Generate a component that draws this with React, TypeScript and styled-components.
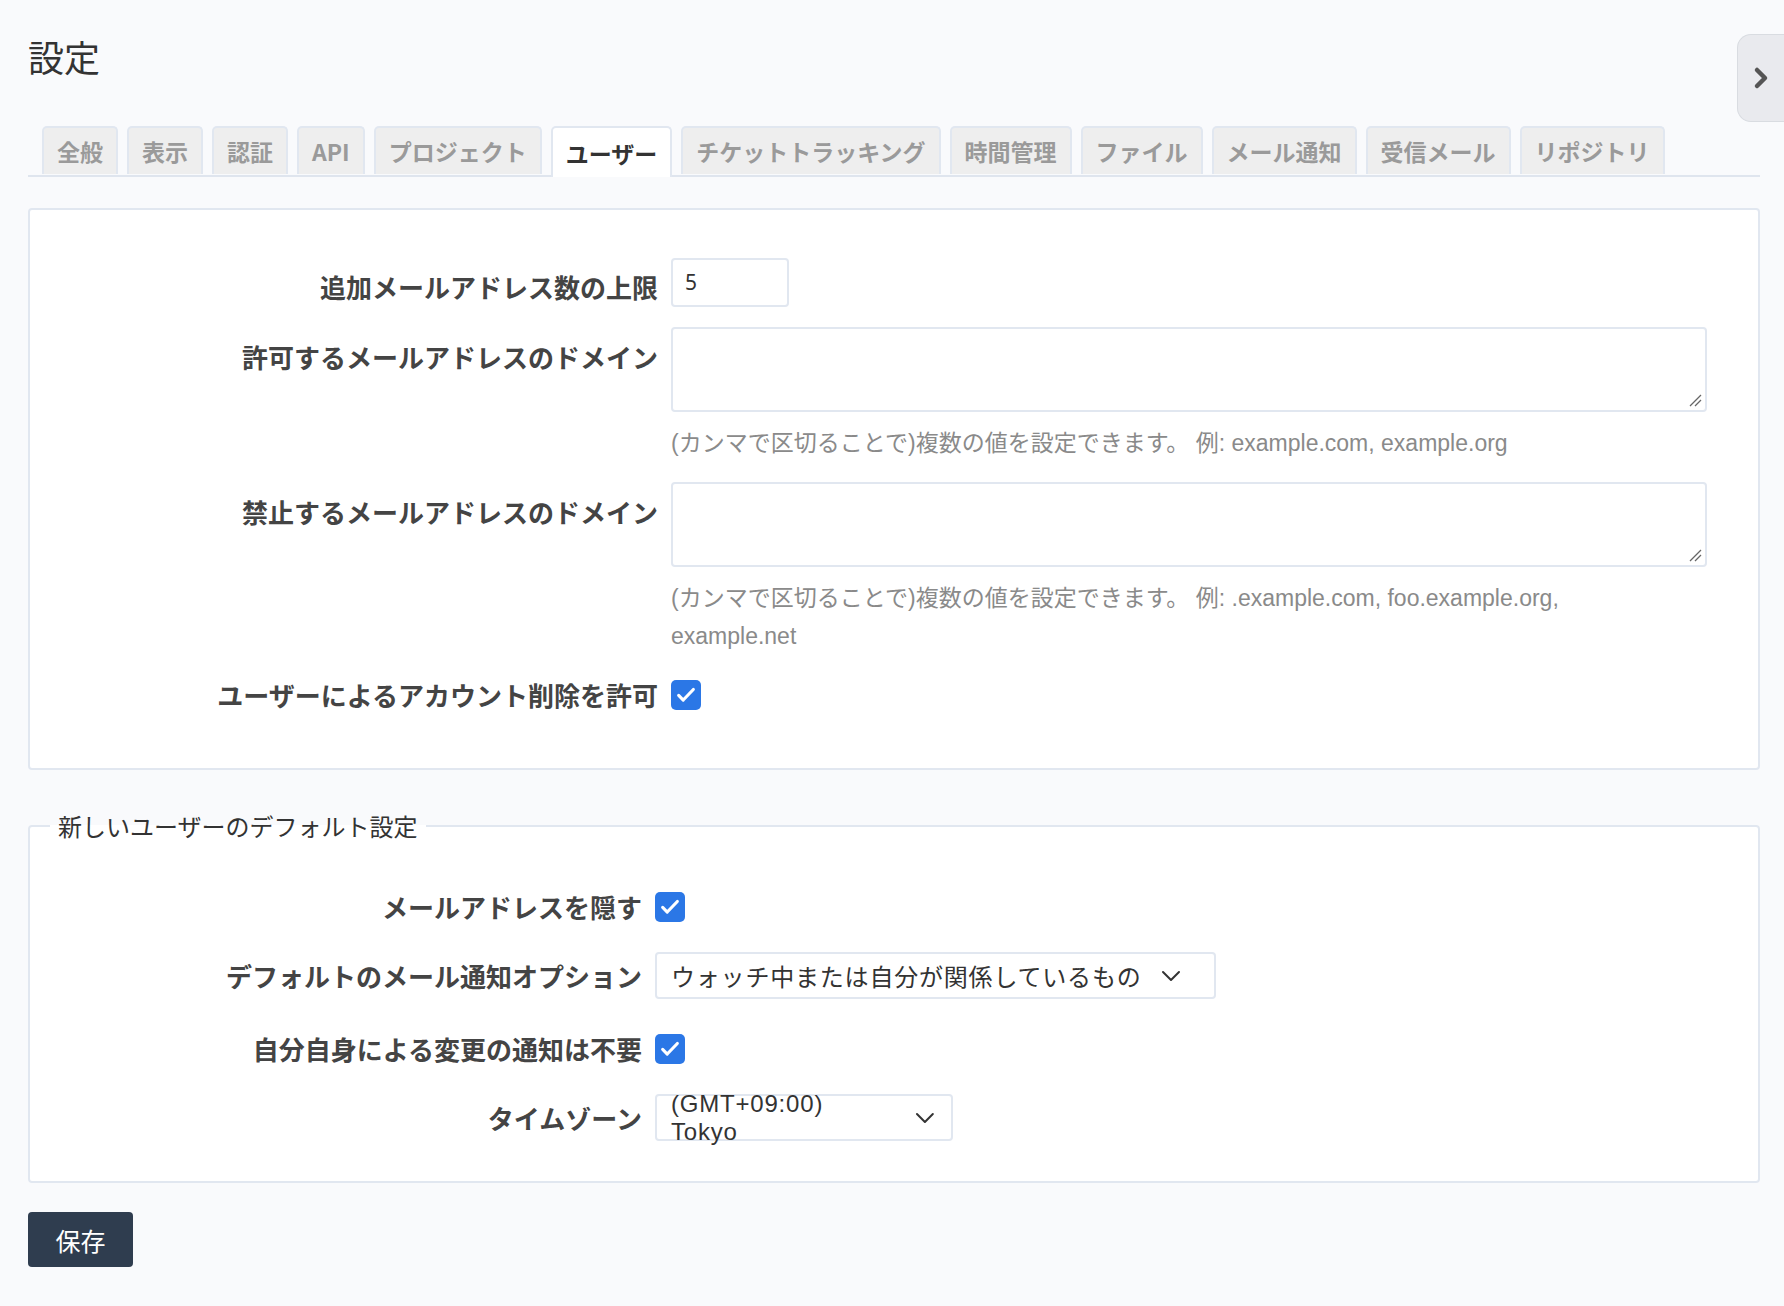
import React from "react";
import styled, { createGlobalStyle } from "styled-components";

const Global = createGlobalStyle`
  html, body { margin: 0; padding: 0; background: #f9fafc; }
  body { font-family: "Noto Sans CJK JP", "Noto Sans", sans-serif; color: #333; }
`;

const Page = styled.div`
  position: relative;
  padding: 30px 0 40px 28px;
  width: 1760px;
  box-sizing: border-box;
`;

const Title = styled.h2`
  margin: 0 0 44px;
  font-size: 36px;
  font-weight: 400;
  line-height: 52px;
  color: #333;
`;

const SideToggle = styled.div`
  position: absolute;
  right: -24px;
  top: 34px;
  width: 46px;
  height: 86px;
  background: #e9eaee;
  border: 1px solid #d9dce1;
  border-right: none;
  border-radius: 14px 0 0 14px;
  display: flex;
  align-items: center;
  justify-content: center;
`;

const Tabs = styled.div`
  display: flex;
  gap: 9px;
  padding-left: 14px;
  border-bottom: 2px solid #dfe5ee;
  height: 49px;
`;

const Tab = styled.div<{ $active?: boolean }>`
  height: ${({ $active }) => ($active ? 51 : 48)}px;
  box-sizing: border-box;
  padding: 0 13px;
  display: flex;
  align-items: center;
  font-size: 23px;
  font-weight: 700;
  color: ${({ $active }) => ($active ? "#333" : "#9a9a9a")};
  background: ${({ $active }) => ($active ? "#fff" : "#eeeeee")};
  border: 2px solid #e1e7f0;
  border-bottom: none;
  border-radius: 5px 5px 0 0;
  position: relative;
  z-index: 1;
`;

const Box = styled.div`
  margin-top: 31px;
  background: #fff;
  border: 2px solid #e1e7f0;
  border-radius: 4px;
  padding: 48px 0 50px;
`;

const Fieldset = styled.fieldset`
  margin: 38px 0 0;
  background: #fff;
  border: 2px solid #e1e7f0;
  border-radius: 4px;
  padding: 40px 0 40px;
`;

const Legend = styled.legend`
  margin-left: 20px;
  padding: 0 8px;
  font-size: 24px;
  color: #333;
`;

const Row = styled.div<{ $label: number; $gap?: number }>`
  display: grid;
  grid-template-columns: ${({ $label }) => $label}px 1fr;
  column-gap: 13px;
  align-items: start;
  margin-bottom: ${({ $gap }) => $gap ?? 20}px;
`;

const CenterRow = styled(Row)`
  align-items: center;
  min-height: 47px;
`;

const Label = styled.label<{ $pad?: number }>`
  text-align: right;
  font-size: 26px;
  font-weight: 700;
  color: #444;
  line-height: 38px;
  padding-top: ${({ $pad }) => $pad ?? 10}px;
  white-space: nowrap;
`;

const Input = styled.div`
  width: 118px;
  height: 49px;
  box-sizing: border-box;
  border: 2px solid #e1e7f0;
  border-radius: 4px;
  font-size: 21px;
  padding: 8px 12px;
  color: #333;
  font-family: "Noto Sans", sans-serif;
`;

const Textarea = styled.div`
  position: relative;
  width: 1036px;
  height: 85px;
  box-sizing: border-box;
  border: 2px solid #e1e7f0;
  border-radius: 4px;
`;

const Grip = styled.svg`
  position: absolute;
  right: 3px;
  bottom: 3px;
`;

const Hint = styled.div`
  margin-top: 12px;
  font-family: "Liberation Sans", "Noto Sans CJK JP", sans-serif;
  font-size: 23px;
  line-height: 38px;
  color: #8a8a8a;
  width: 960px;
`;

const Check = styled.div`
  width: 30px;
  height: 30px;
  border-radius: 5px;
  background: #2b77e6;
  display: flex;
  align-items: center;
  justify-content: center;
`;

const Select = styled.div<{ $w: number }>`
  width: ${({ $w }) => $w}px;
  height: 47px;
  box-sizing: border-box;
  border: 2px solid #e1e7f0;
  border-radius: 4px;
  background: #fff;
  display: flex;
  align-items: center;
  gap: 18px;
  padding: 0 14px;
  font-family: "Liberation Sans", "Noto Sans CJK JP", sans-serif;
  font-size: 24px;
  color: #333;
  letter-spacing: 0.8px;
`;

const SaveButton = styled.button`
  margin-top: 29px;
  width: 105px;
  height: 55px;
  background: #2f3d4f;
  color: #fff;
  border: none;
  border-radius: 4px;
  font-size: 25px;
  font-family: "Noto Sans CJK JP", sans-serif;
`;

const CheckBox = () => (
  <Check>
    <svg width="22" height="22" viewBox="0 0 24 24" fill="none" stroke="#fff" strokeWidth="3.4" strokeLinecap="round" strokeLinejoin="round">
      <path d="M4 12.5l5 5L20 6" />
    </svg>
  </Check>
);

const Chevron = () => (
  <svg width="24" height="24" viewBox="0 0 24 24" fill="none" stroke="#333" strokeWidth="2" strokeLinecap="round" strokeLinejoin="round">
    <path d="M4 8l8 8 8-8" />
  </svg>
);

const ResizeGrip = () => (
  <Grip width="14" height="14" viewBox="0 0 14 14" stroke="#666" strokeWidth="1.3">
    <path d="M2 13L13 2M7 13l6-6" />
  </Grip>
);

const tabs = ["全般", "表示", "認証", "API", "プロジェクト", "ユーザー", "チケットトラッキング", "時間管理", "ファイル", "メール通知", "受信メール", "リポジトリ"];

export default function App() {
  return (
    <>
      <Global />
      <Page>
        <Title>設定</Title>
        <SideToggle>
          <svg width="22" height="26" viewBox="0 0 22 26" fill="none" stroke="#555" strokeWidth="4.5" strokeLinecap="round" strokeLinejoin="round">
            <path d="M7 5l8 8-8 8" />
          </svg>
        </SideToggle>
        <Tabs>
          {tabs.map((t) => (
            <Tab key={t} $active={t === "ユーザー"}>{t}</Tab>
          ))}
        </Tabs>

        <Box>
          <Row $label={628}>
            <Label $pad={10}>追加メールアドレス数の上限</Label>
            <Input>5</Input>
          </Row>
          <Row $label={628}>
            <Label $pad={11}>許可するメールアドレスのドメイン</Label>
            <div>
              <Textarea><ResizeGrip /></Textarea>
              <Hint>(カンマで区切ることで)複数の値を設定できます。 例: example.com, example.org</Hint>
            </div>
          </Row>
          <Row $label={628} $gap={16}>
            <Label $pad={11}>禁止するメールアドレスのドメイン</Label>
            <div>
              <Textarea><ResizeGrip /></Textarea>
              <Hint>(カンマで区切ることで)複数の値を設定できます。 例: .example.com, foo.example.org, example.net</Hint>
            </div>
          </Row>
          <CenterRow $label={628} $gap={0}>
            <Label $pad={0}>ユーザーによるアカウント削除を許可</Label>
            <CheckBox />
          </CenterRow>
        </Box>

        <Fieldset>
          <Legend>新しいユーザーのデフォルト設定</Legend>
          <CenterRow $label={612} $gap={22}>
            <Label $pad={0}>メールアドレスを隠す</Label>
            <CheckBox />
          </CenterRow>
          <CenterRow $label={612} $gap={26}>
            <Label $pad={0}>デフォルトのメール通知オプション</Label>
            <Select $w={561}>ウォッチ中または自分が関係しているもの<Chevron /></Select>
          </CenterRow>
          <CenterRow $label={612} $gap={22}>
            <Label $pad={0}>自分自身による変更の通知は不要</Label>
            <CheckBox />
          </CenterRow>
          <CenterRow $label={612} $gap={0}>
            <Label $pad={0}>タイムゾーン</Label>
            <Select $w={298}>(GMT+09:00) Tokyo<Chevron /></Select>
          </CenterRow>
        </Fieldset>

        <SaveButton>保存</SaveButton>
      </Page>
    </>
  );
}
